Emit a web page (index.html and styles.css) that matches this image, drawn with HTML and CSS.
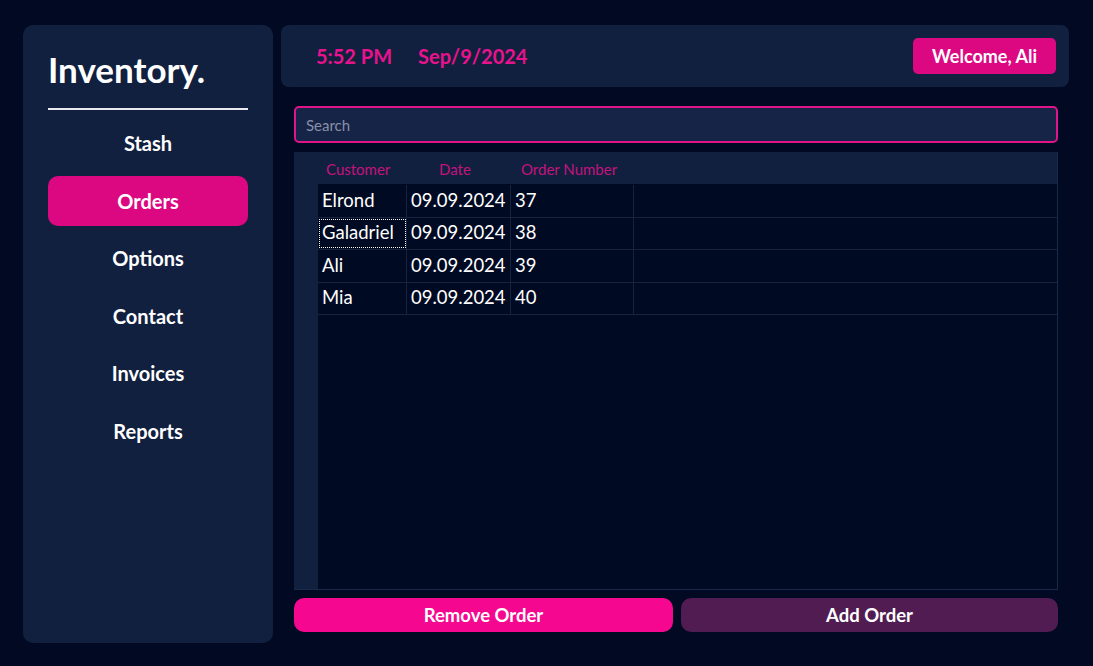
FILE: index.html
```html
<!DOCTYPE html>
<html>
<head>
<meta charset="utf-8">
<link rel="stylesheet" href="styles.css">
</head>
<body>
<div class="app">
  <aside class="sidebar">
    <h1 class="brand">Inventory.</h1>
    <div class="divider"></div>
    <nav class="menu">
      <div class="menu-item">Stash</div>
      <div class="menu-item active">Orders</div>
      <div class="menu-item">Options</div>
      <div class="menu-item">Contact</div>
      <div class="menu-item">Invoices</div>
      <div class="menu-item">Reports</div>
    </nav>
  </aside>
  <main class="main">
    <header class="topbar">
      <span class="time">5:52 PM</span>
      <span class="date">Sep/9/2024</span>
      <span class="spacer"></span>
      <button class="welcome">Welcome, Ali</button>
    </header>
    <section class="content">
      <div class="search"><span class="placeholder">Search</span></div>
      <div class="grid">
        <div class="grid-head">
          <div class="corner"></div>
          <div class="hcell c1 h1">Customer</div>
          <div class="hcell c2 h2">Date</div>
          <div class="hcell c3 h3">Order Number</div>
          <div class="hcell c4"></div>
        </div>
        <div class="grid-body">
          <div class="rowheads"></div>
          <div class="rows">
            <div class="row"><div class="cell c1">Elrond</div><div class="cell c2">09.09.2024</div><div class="cell c3">37</div><div class="cell c4"></div></div>
            <div class="row"><div class="cell c1 focused">Galadriel</div><div class="cell c2">09.09.2024</div><div class="cell c3">38</div><div class="cell c4"></div></div>
            <div class="row"><div class="cell c1">Ali</div><div class="cell c2">09.09.2024</div><div class="cell c3">39</div><div class="cell c4"></div></div>
            <div class="row"><div class="cell c1">Mia</div><div class="cell c2">09.09.2024</div><div class="cell c3">40</div><div class="cell c4"></div></div>
          </div>
        </div>
      </div>
      <div class="actions">
        <button class="btn remove">Remove Order</button>
        <button class="btn add">Add Order</button>
      </div>
    </section>
  </main>
</div>
</body>
</html>
```
FILE: styles.css
```css
* { box-sizing: border-box; }
html, body { margin: 0; height: 100%; }
body {
  background: #010a22;
  font-family: Lato, "Open Sans", sans-serif;
  color: #fff;
}
.app {
  display: flex;
  gap: 8px;
  padding: 25px 24px 23px 23px;
  height: 666px;
}
.sidebar {
  width: 250px;
  background: #11203f;
  border-radius: 10px;
  padding: 22px 25px;
  display: flex;
  flex-direction: column;
}
.brand {
  margin: 0;
  font-size: 35px;
  font-weight: 700;
  line-height: 44px;
  color: #fff;
}
.divider {
  height: 2px;
  background: #e8e8ee;
  margin-top: 17px;
}
.menu {
  display: flex;
  flex-direction: column;
  gap: 7.6px;
  margin-top: 8px;
}
.menu-item {
  height: 50px;
  display: flex;
  align-items: center;
  justify-content: center;
  font-size: 20px;
  font-weight: 700;
  border-radius: 10px;
  color: #fff;
}
.menu-item.active { background: #dc0882; }
.main {
  flex: 1;
  display: flex;
  flex-direction: column;
}
.topbar {
  height: 62px;
  background: #11203f;
  border-radius: 8px;
  display: flex;
  align-items: center;
  padding: 0 13px 0 35px;
}
.time, .date {
  color: #e8138c;
  font-size: 20px;
  font-weight: 700;
}
.date { margin-left: 26px; }
.spacer { flex: 1; }
.welcome {
  background: #dc0882;
  color: #fff;
  border: none;
  border-radius: 5px;
  height: 36px;
  width: 143px;
  font-family: inherit;
  font-size: 18px;
  font-weight: 700;
  padding: 0;
}
.content {
  flex: 1;
  display: flex;
  flex-direction: column;
  padding: 19px 11px 11px 13px;
}
.search {
  height: 37px;
  border: 2.5px solid #e0138a;
  border-radius: 5px;
  background: #162447;
  display: flex;
  align-items: center;
  padding-left: 10px;
}
.placeholder { color: #8890a6; font-size: 15px; }
.grid {
  margin-top: 9px;
  height: 438px;
  display: flex;
  flex-direction: column;
  border-right: 1px solid #18294a;
  border-bottom: 1px solid #18294a;
  background: #000a22;
}
.grid-head {
  height: 32px;
  display: flex;
  background: #11203f;
}
.corner { width: 24px; }
.c1 { width: 89px; }
.c2 { width: 104px; }
.c3 { width: 123px; }
.c4 { flex: 1; }
.hcell {
  display: flex;
  align-items: center;
  color: #c4137c;
  font-size: 15px;
  padding-top: 2px;
}
.h1 { padding-left: 8px; }
.h2 { padding-left: 32px; }
.h3 { padding-left: 10px; }
.grid-body { flex: 1; display: flex; }
.rowheads { width: 24px; background: #11203f; }
.rows { flex: 1; padding-top: 1px; }
.row {
  display: flex;
  height: 32.5px;
  border-bottom: 1.5px solid #16243f;
}
.cell {
  display: flex;
  align-items: center;
  font-size: 18.5px;
  padding-left: 4px;
  padding-bottom: 2px;
  border-right: 1px solid #16243f;
  color: #fff;
}
.cell.c4 { border-right: none; }
.cell.focused {
  outline: 1px dotted #fff;
  outline-offset: -2px;
}
.actions {
  margin-top: 8px;
  display: flex;
  gap: 8px;
}
.btn {
  height: 34px;
  border: none;
  border-radius: 10px;
  color: #fff;
  font-family: inherit;
  font-size: 18.5px;
  font-weight: 700;
  padding: 0;
}
.remove { background: #f5078f; flex: 379 1 0; }
.add { background: #501c52; flex: 377 1 0; }
```
